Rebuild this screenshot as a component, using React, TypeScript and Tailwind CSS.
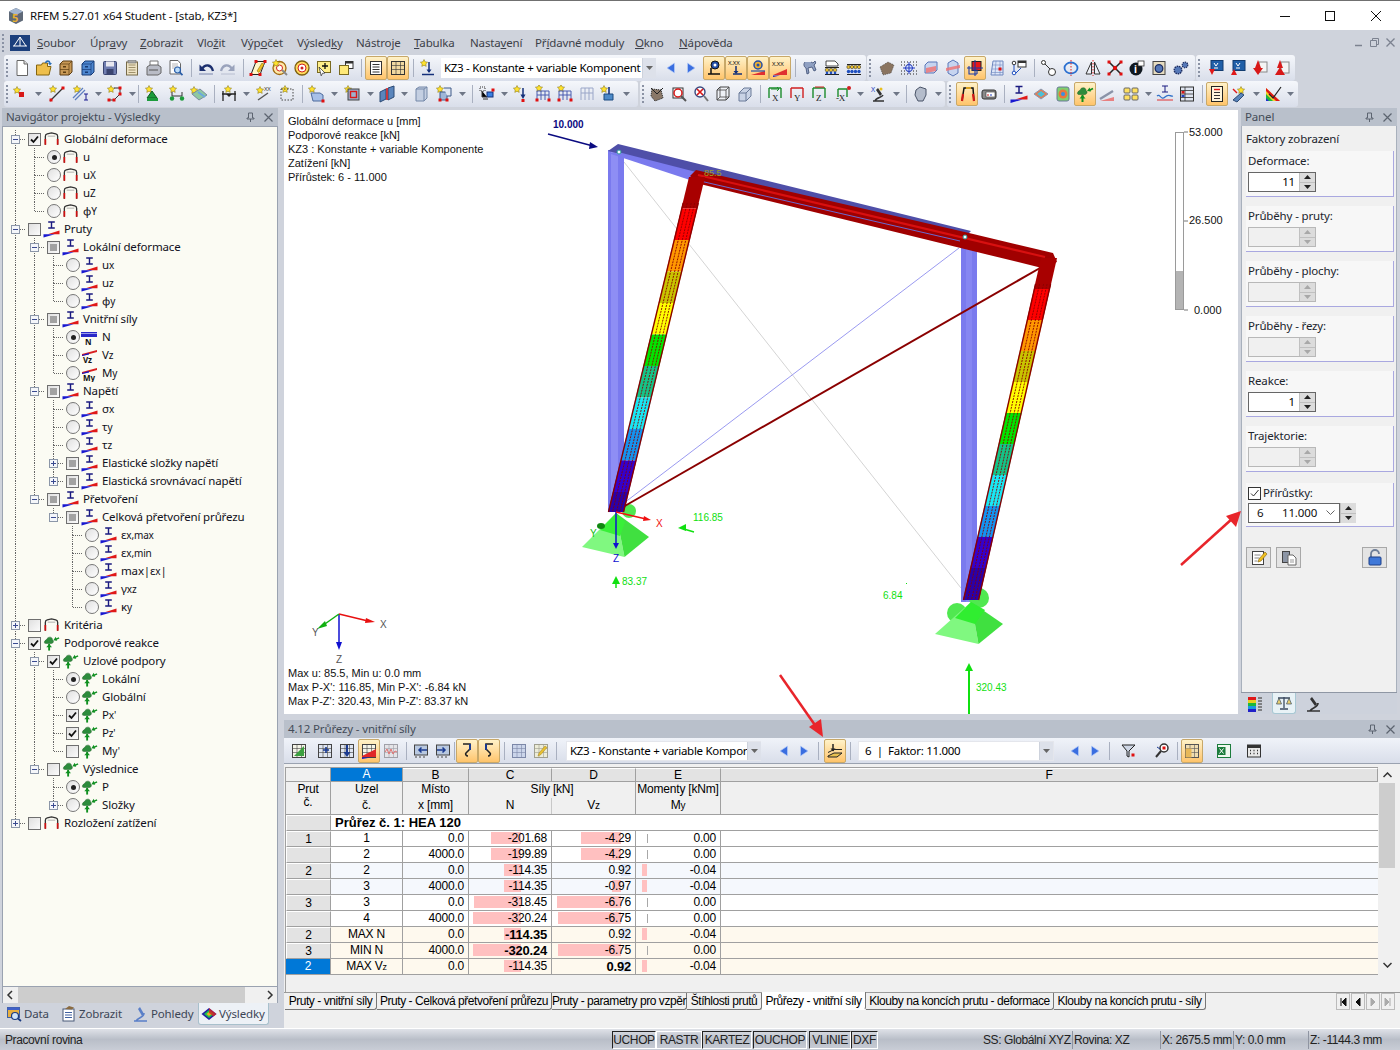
import type { ReactNode } from "react";

// ─── Toolbar icons (18x18 drawings) ───────────────────────────────────────────
const star = (x: number, y: number) => (
  <path
    d={`M${x} ${y - 3.5}l1.1 2.3 2.5.4-1.8 1.7.4 2.5-2.2-1.2-2.2 1.2.4-2.5-1.8-1.7 2.5-.4z`}
    fill="#ffe22e"
    stroke="#7a6a10"
    strokeWidth=".5"
  />
);
const redDot = (x: number, y: number) => <rect x={x - 1.5} y={y - 1.5} width="3" height="3" fill="#e01010" />;
const tableGrid = (fill = "#e8e2c8", stroke = "#555") => (
  <>
    <rect x="2.5" y="2.5" width="13" height="13" fill={fill} stroke={stroke} />
    <path d="M2.5 6.5h13M2.5 10.5h13M7 2.5v13M11.5 2.5v13" stroke={stroke} strokeWidth=".6" fill="none" />
  </>
);
const chest = (a: string, b: string) => (
  <>
    <path d="M3 5l3-3h9v11l-3 3H3z" fill={a} stroke={b} />
    <path d="M3 5h9v11M12 5l3-3M3 10.5h9" stroke={b} strokeWidth=".7" fill="none" />
    <rect x="6" y="7" width="3" height="1.5" fill={b} />
    <rect x="6" y="12.5" width="3" height="1.5" fill={b} />
  </>
);
const beamWedge = (
  <>
    <path d="M9 1.500v6.500M5.500 1.500h7M5.500 8h7" stroke="#1a1a80" strokeWidth="1.500" fill="none" />
    <path d="M5 14.500L17.500 10.500v4z" fill="#e01818" />
    <path d="M.5 14.500h12L.5 18z" fill="#1818d0" />
  </>
);
const frameGlyph = (
  <>
    <path d="M2.500 15V6q0-2 2-2.500L9 2.500l4.500 1q2 .5 2 2.500v9" fill="none" stroke="#333" strokeWidth="1.400" />
    <path d="M2.500 9v6M15.500 9v6" stroke="#d01010" strokeWidth="1.800" />
    <path d="M5 6h8" stroke="#999" strokeWidth=".8" />
  </>
);
const supGlyph = (
  <>
    <path d="M1.500 8.500c0-3 3-2.500 3.500-5 2.500-1.500 5-.5 5 2 1.500 1 1.500 3.500-1 4H3c-1 0-1.500-.5-1.500-1z" fill="#2d8c3c" stroke="#1c5c24" strokeWidth=".5" />
    <path d="M6.500 10v7" stroke="#0f9020" strokeWidth="2" />
    <path d="M3.500 13.500l3-3.500 3 3.500z" fill="#0f9020" />
    <path d="M17 3.500l-4 2" stroke="#0f9020" strokeWidth="1.600" />
    <path d="M13.500 2.500l-2.500 3.500 4 .5z" fill="#0f9020" />
  </>
);

const ICONS: Record<string, ReactNode> = {
  new: (
    <>
      <path d="M4 1.500h7l3.500 3.500v11.500H4z" fill="#fff" stroke="#666" />
      <path d="M11 1.500V5h3.500" fill="#ddd" stroke="#666" />
    </>
  ),
  open: (
    <>
      <path d="M1.500 6h5l1-2h5v3.500h3.500l-2 8.500H1.500z" fill="#eebf4c" stroke="#85650f" />
      <path d="M10.500 4c1-2.500 3.500-2.500 4.500 0" stroke="#2a6fb8" fill="none" strokeWidth="1.600" />
      <path d="M13 4h4l-2 2.500z" fill="#2a6fb8" />
    </>
  ),
  chest: chest("#c99a57", "#5c3d12"),
  chestb: chest("#4d86cf", "#173a75"),
  save: (
    <>
      <rect x="2.500" y="2.500" width="13" height="13" rx="1" fill="#6f7db0" stroke="#3a4470" />
      <rect x="5" y="2.500" width="8" height="5" fill="#e8e8f0" />
      <rect x="5.500" y="10" width="7" height="5.500" fill="#3a4470" />
    </>
  ),
  memo: (
    <>
      <rect x="3.500" y="3" width="11" height="13" fill="#eee3c4" stroke="#766a48" />
      <path d="M5.500 6h7M5.500 8.500h7M5.500 11h7M5.500 13.500h7" stroke="#8a7c55" strokeWidth=".8" />
      <rect x="5" y="1.500" width="8" height="2.500" fill="#a8a8a8" stroke="#666" strokeWidth=".5" />
    </>
  ),
  print: (
    <>
      <path d="M5 2h8v5H5z" fill="#fff" stroke="#777" />
      <path d="M2 8l3-2h8l3 2v6l-3 2H2z" fill="#b9bcc6" stroke="#666" />
      <path d="M4 11h9" stroke="#555" />
    </>
  ),
  prev: (
    <>
      <path d="M3 1.500h8l2.500 3V15H3z" fill="#fff" stroke="#666" />
      <path d="M5 5h6M5 7h6M5 9h3" stroke="#999" strokeWidth=".7" />
      <circle cx="10.500" cy="11" r="3" fill="#bcdcf8" stroke="#2a5ea8" strokeWidth="1.200" />
      <path d="M12.500 13.200l3 3" stroke="#2a5ea8" strokeWidth="1.800" />
    </>
  ),
  undo: (
    <>
      <path d="M2.500 5.500v6.500h6.500z" fill="#1c2f6e" />
      <path d="M5 10c3-5 9-5 11 2" fill="none" stroke="#1c2f6e" strokeWidth="2.300" />
      <path d="M2 15h14" stroke="#7a86ac" />
    </>
  ),
  redo: (
    <>
      <path d="M15.500 5.500v6.500H9z" fill="#9aa3bc" />
      <path d="M13 10c-3-5-9-5-11 2" fill="none" stroke="#9aa3bc" strokeWidth="2.300" />
      <path d="M2 15h14" stroke="#b8bed0" />
    </>
  ),
  para: (
    <>
      <path d="M7 2.500h9l-5 13H2z" fill="#fff6c8" stroke="#222" />
      <path d="M8 12l5-8 2 1.500-5 8z" fill="#f2c220" stroke="#7a5a00" strokeWidth=".5" />
      {redDot(7, 2.5)}
      {redDot(16, 2.5)}
      {redDot(2, 15.5)}
      {redDot(11, 15.5)}
    </>
  ),
  tgt: (
    <>
      <circle cx="8.500" cy="9" r="6.500" fill="#ffe9a8" stroke="#a06a10" strokeWidth="1.300" />
      <circle cx="8.500" cy="9" r="3" fill="#fff" stroke="#d02020" />
      <path d="M11 11l5 5" stroke="#888" strokeWidth="1.800" />
      {star(5, 4)}
    </>
  ),
  tgt2: (
    <>
      <circle cx="9" cy="9" r="7" fill="#ffda5c" stroke="#7d5f10" strokeWidth="1.300" />
      <circle cx="9" cy="9" r="4" fill="#fff" stroke="#d02020" />
      <circle cx="9" cy="9" r="1.500" fill="#d02020" />
    </>
  ),
  notep: (
    <>
      <rect x="2.500" y="2.500" width="13" height="11" fill="#ffef8a" stroke="#7a6a20" />
      <path d="M10 4v6M7 7h6" stroke="#101010" strokeWidth="1.300" />
      <path d="M4 8l6 6-2.500.3-1.300 2.500z" fill="#fff" stroke="#222" strokeWidth=".7" />
    </>
  ),
  wins: (
    <>
      <rect x="8.500" y="2.500" width="7.500" height="7" fill="#fff" stroke="#333" />
      <rect x="8.500" y="2.500" width="7.500" height="2" fill="#333" />
      <rect x="2.500" y="6.500" width="9" height="9" fill="#ffe978" stroke="#7a6a20" />
    </>
  ),
  list: (
    <>
      <rect x="3.500" y="2.500" width="11" height="13" fill="#fff" stroke="#333" />
      <path d="M5.500 5.500h7M5.500 8h7M5.500 10.500h7M5.500 13h7" stroke="#333" />
    </>
  ),
  table: tableGrid("#f0d8a0", "#333"),
  load: (
    <>
      {star(5, 4)}
      <path d="M10 3v10" stroke="#14307a" strokeWidth="1.500" />
      <path d="M7.500 10.500h5L10 14z" fill="#14307a" />
      <path d="M3 15.500h12" stroke="#14307a" strokeWidth="1.500" />
    </>
  ),
  tl: <path d="M12.500 4v10L5 9z" fill="#3a6ee0" stroke="#b8cdf8" strokeWidth=".7" />,
  tr: <path d="M5.500 4v10L13 9z" fill="#3a6ee0" stroke="#b8cdf8" strokeWidth=".7" />,
  p1: (
    <>
      <circle cx="10" cy="6" r="4" fill="#244fa8" stroke="#111" />
      <circle cx="10" cy="6" r="1.500" fill="#fff" />
      <path d="M6 9v6M3 15h12" stroke="#111" strokeWidth="1.500" />
    </>
  ),
  p2: (
    <>
      <text x="1" y="6" fontSize="6" fill="#111">X.XX</text>
      <path d="M9 7v7M6 15h9" stroke="#14307a" strokeWidth="1.500" />
      <path d="M6.500 12h5L9 15z" fill="#14307a" />
    </>
  ),
  p3: (
    <>
      <circle cx="9" cy="6" r="4" fill="#eeb030" stroke="#244fa8" strokeWidth="1.500" />
      <circle cx="9" cy="6" r="1.500" fill="#244fa8" />
      <path d="M2 16l14-4v4z" fill="#e03030" />
      <path d="M2 12h14" stroke="#244fa8" strokeWidth="1.200" />
    </>
  ),
  p4: (
    <>
      <text x="1" y="7" fontSize="6" fill="#111">X.XX</text>
      <path d="M2 16l14-6v6z" fill="#e03030" />
      <path d="M2 16.500h7l-7 1.500z" fill="#1a1ad0" />
    </>
  ),
  wrench: <path d="M4 3c-2 2-1 5 1 6l1 6 2-1-1-5 4-1 2 4 2-1-2-5c2-1 2-3 1-4l-2 2-2-1" fill="#8fa0c2" stroke="#3a4a70" strokeWidth=".8" />,
  abac1: (
    <>
      <path d="M3 2h9l3 3v2H3z" fill="#fff" stroke="#222" strokeWidth=".8" />
      <path d="M2 8.500h14M2 15.500h14" stroke="#222" />
      {[4, 8, 12].map((x) => <circle key={x} cx={x} cy="11" r="1.800" fill="#e8bf30" stroke="#222" strokeWidth=".5" />)}
      {[4, 8, 12].map((x) => <circle key={x} cx={x} cy="14" r="1.300" fill="#2050c0" />)}
    </>
  ),
  abac2: (
    <>
      <path d="M2 5.500h14M2 15.500h14" stroke="#222" />
      {[3.5, 7, 10.5, 14].map((x) => <circle key={x} cx={x} cy="8" r="1.700" fill="#e8bf30" stroke="#222" strokeWidth=".5" />)}
      {[3.5, 7, 10.5, 14].map((x) => <circle key={x} cx={x} cy="12.500" r="1.700" fill="#2050c0" />)}
    </>
  ),
  rough: <path d="M2 8l8-5 6 3-3 8-8 2z" fill="#8a7460" stroke="#333" strokeWidth=".6" strokeDasharray="1 1" />,
  grid: (
    <>
      <path d="M1 3h16M1 6h16M1 12h16M1 15h16" stroke="#222" strokeDasharray="1 2" />
      <circle cx="9" cy="9" r="3.500" fill="#dbe6ff" stroke="#2038c0" />
      <path d="M9 3v12M3 9h12" stroke="#2038c0" />
    </>
  ),
  iso1: (
    <>
      <path d="M6 3h9v8l-3 3H3V6z" fill="#c6d4f0" stroke="#5a76b8" />
      <path d="M4 9l10-2v5L4 14z" fill="#f07070" opacity=".8" />
    </>
  ),
  iso2: (
    <>
      <path d="M9 1l5 3v10l-5 3-5-3V4z" fill="#c6d4f0" stroke="#5a76b8" />
      <path d="M2 9l14-3v3L2 12z" fill="#f07070" opacity=".8" />
    </>
  ),
  iso3: (
    <>
      <rect x="6" y="2.500" width="9" height="9" fill="#e81818" stroke="#222" />
      <path d="M3 7v8h8M6 11h5v4M9 1v16M1 9h16" stroke="#1a3aa8" strokeWidth="1.100" fill="none" />
    </>
  ),
  mesh: (
    <>
      <path d="M5 2h10v14H3z" fill="#dde6f8" stroke="#6f88c0" />
      <path d="M4.500 6h10M4 10h11M3.500 13.500h11.500M8 2l-1 14M12 2v14" stroke="#6f88c0" strokeWidth=".6" />
      {redDot(12, 10)}
    </>
  ),
  path: (
    <>
      <rect x="8" y="2" width="8" height="6" fill="#fff" stroke="#333" />
      <rect x="8" y="2" width="8" height="2" fill="#333" />
      <circle cx="4" cy="4" r="1.800" fill="#fff" stroke="#333" />
      <circle cx="4" cy="14" r="1.800" fill="#fff" stroke="#2050c0" />
      <path d="M4 6v6M6 14l5-5" stroke="#2050c0" />
    </>
  ),
  chain: (
    <>
      <circle cx="3.500" cy="3.500" r="2" fill="#fff" stroke="#333" />
      <circle cx="12" cy="13" r="3.500" fill="#fff" stroke="#333" />
      <path d="M5 5l5 5" stroke="#333" />
    </>
  ),
  rot: (
    <>
      <ellipse cx="9" cy="9" rx="6.500" ry="5.500" fill="none" stroke="#2a6fd0" strokeWidth="1.800" />
      <path d="M9 1v16" stroke="#e02020" strokeDasharray="1.500 1.500" />
    </>
  ),
  mirror: (
    <>
      <path d="M7.500 3L2 15h5.500zM10.500 3L16 15h-5.500z" fill="#eef1f8" stroke="#333" />
      <path d="M9 1v16" stroke="#e02020" strokeDasharray="1.500 1.500" />
    </>
  ),
  xcross: (
    <>
      <path d="M3 3l12 12M15 3L3 15" stroke="#222" strokeWidth="1.500" />
      <circle cx="9" cy="9" r="2.200" fill="#e01010" />
      {redDot(3, 3)}
      {redDot(15, 3)}
      {redDot(3, 15)}
      {redDot(15, 15)}
    </>
  ),
  info: (
    <>
      <circle cx="8" cy="10" r="6.500" fill="#101820" />
      <text x="6" y="14" fontSize="10" fontWeight="700" fill="#fff">i</text>
      <rect x="10" y="2" width="6" height="5" fill="#fff" stroke="#333" strokeWidth=".8" />
    </>
  ),
  gear1: (
    <>
      <rect x="3" y="2.500" width="12" height="13" fill="#e6dcc0" stroke="#444" />
      <circle cx="9" cy="9.500" r="3.800" fill="#5578b8" stroke="#1c2c60" strokeWidth="1.300" />
    </>
  ),
  gears: (
    <>
      <circle cx="6" cy="11" r="3.800" fill="#5578b8" stroke="#1c2c60" strokeDasharray="1.500 .8" strokeWidth="1.400" />
      <circle cx="13" cy="6" r="2.800" fill="#5578b8" stroke="#1c2c60" strokeDasharray="1.300 .8" strokeWidth="1.200" />
    </>
  ),
  flagd: (
    <>
      <rect x="4" y="1.500" width="12" height="10" fill="#1f5fa8" stroke="#123c70" />
      <path d="M7 4l2 3 2-3M7 9h4" stroke="#fff" fill="none" />
      <path d="M2 10h6l-3 6z" fill="#e01818" />
    </>
  ),
  flagu: (
    <>
      <rect x="4" y="1.500" width="12" height="10" fill="#1f5fa8" stroke="#123c70" />
      <path d="M7 4l2 3 2-3M7 9h4" stroke="#fff" fill="none" />
      <path d="M2 16h6l-3-6z" fill="#e01818" />
    </>
  ),
  redd: (
    <>
      <rect x="8" y="3" width="8" height="10" fill="#f4f4f4" stroke="#888" />
      <path d="M7 1l3 8H4zM2 9h10l-5 7z" fill="#d81818" />
    </>
  ),
  redu: (
    <>
      <rect x="8" y="3" width="8" height="11" fill="#f4f4f4" stroke="#888" />
      <path d="M7 1l3 8H4zM2 16l5-8 5 8z" fill="#d81818" />
    </>
  ),
  node: (
    <>
      {star(5, 5)}
      <rect x="7" y="7" width="5" height="5" fill="#d81818" />
    </>
  ),
  line: (
    <>
      {star(5, 4)}
      <path d="M2 16L15 3" stroke="#333" strokeWidth="1.300" />
      {redDot(3, 15)}
      {redDot(15, 3)}
    </>
  ),
  linei: (
    <>
      {star(5, 4)}
      <path d="M1 13L11 3M3 15L13 5" stroke="#5f7fc0" strokeWidth="1.300" />
      <path d="M14 9v6M12 9h4M12 15h4" stroke="#1a1a90" />
    </>
  ),
  poly: (
    <>
      {star(5, 4)}
      <path d="M8 3h6v6l-3 3-3 3H3" fill="none" stroke="#333" />
      {redDot(14, 3)}
      {redDot(14, 9)}
      {redDot(8, 15)}
      {redDot(3, 15)}
    </>
  ),
  sup: (
    <>
      {star(5, 4)}
      <path d="M8 6l5 7H3z" fill="#1c9c3c" stroke="#0f5c20" />
      <rect x="3" y="13" width="11" height="3" fill="#1c9c3c" />
    </>
  ),
  sup2: (
    <>
      {star(5, 4)}
      <path d="M4 11h10M4 7v4M14 7v4" stroke="#333" />
      <circle cx="4" cy="13.500" r="2.200" fill="#1c9c3c" />
      <circle cx="14" cy="13.500" r="2.200" fill="#1c9c3c" />
    </>
  ),
  surf: (
    <>
      {star(4, 5)}
      <path d="M2 9l8-5 7 6-8 5z" fill="#8fc8a0" stroke="#7a8aa0" />
      <path d="M8 7l7 5" stroke="#6aa8e0" strokeWidth="2" />
    </>
  ),
  dim: (
    <>
      {star(8, 4)}
      <path d="M2 9h14M3 6v10M15 6v10" stroke="#222" strokeWidth="1.300" />
      <path d="M6 9l3 3 3-3" fill="#222" />
    </>
  ),
  dimx: (
    <>
      {star(4, 5)}
      <text x="8" y="6" fontSize="6" fill="#444">XX</text>
      <path d="M2 15L12 8" stroke="#555" strokeWidth="1.400" />
    </>
  ),
  boxd: (
    <>
      {star(7, 4)}
      <rect x="3" y="4" width="12" height="11" fill="none" stroke="#444" strokeDasharray="1.500 1.500" />
    </>
  ),
  plane: (
    <>
      {star(4, 4)}
      <path d="M3 8h9l3 2v6H5z" fill="#a7c0e8" stroke="#4d6a9c" />
      {redDot(15, 16)}
    </>
  ),
  frb: (
    <>
      {star(4, 4)}
      <rect x="4" y="4" width="11" height="11" fill="#9fb0cc" stroke="#444" />
      <rect x="6.500" y="6.500" width="6" height="6" fill="none" stroke="#d81818" strokeWidth="1.400" />
    </>
  ),
  sect: (
    <>
      <path d="M2 7l6-3v10l-6 3zM10 3l6-2v11l-6 3z" fill="#5a85bc" stroke="#2c4a74" />
      <path d="M9 3v12" stroke="#d81818" strokeWidth="1.500" />
    </>
  ),
  cubeg: (
    <>
      <path d="M4 4l3-2h8v11l-3 3H4z" fill="#c4cfe2" stroke="#7488a8" />
      <path d="M4 4h8v12M12 4l3-2" stroke="#7488a8" fill="none" />
    </>
  ),
  cubes: (
    <>
      {star(4, 4)}
      <path d="M4 7h7v8H4z" fill="#9fb6d8" stroke="#3e5a88" />
      <path d="M8 3h7v8h-4" fill="#dfe6f2" stroke="#3e5a88" />
      {redDot(4, 15)}
      {redDot(11, 15)}
    </>
  ),
  flow: (
    <>
      <rect x="2" y="2" width="5" height="4" fill="none" stroke="#333" strokeDasharray="1 1" />
      <rect x="9" y="7" width="6" height="5" fill="#3a7fe0" stroke="#14307a" />
      <path d="M4 6v6h5M5 14h5" stroke="#333" />
      {redDot(15, 5)}
    </>
  ),
  loadd: (
    <>
      {star(5, 4)}
      <path d="M11 3v9" stroke="#14307a" strokeWidth="1.500" />
      <path d="M8.500 9.500h5L11 14z" fill="#14307a" />
      {redDot(11, 15.5)}
    </>
  ),
  frames: (
    <>
      {star(5, 3)}
      <path d="M3 15V6h12v9M3 10h12M7 6v9M11 6v9" stroke="#4a5cb0" fill="none" />
      {redDot(3, 15)}
      {redDot(15, 15)}
    </>
  ),
  framesg: <path d="M3 15V3h12v12M3 8h12M7 3v12M11 3v12" stroke="#9aa6c8" fill="none" />,
  wall: (
    <>
      {star(4, 4)}
      <path d="M4 9h9v6H4z" fill="#4d8ac8" stroke="#1d4a80" />
      <path d="M9 2v7" stroke="#14307a" strokeWidth="1.600" />
    </>
  ),
  bug: (
    <>
      <path d="M4 4l9 1 2 8-8 3-4-5z" fill="#8a7868" stroke="#333" strokeDasharray="1.200 .8" />
      <path d="M3 3l6 6M15 3l-6 6" stroke="#222" />
    </>
  ),
  mag1: (
    <>
      <rect x="3" y="3" width="10" height="10" fill="#fff" stroke="#333" />
      <circle cx="8" cy="8" r="4" fill="none" stroke="#d81818" strokeWidth="1.500" />
      <path d="M11 11l5 5" stroke="#555" strokeWidth="2" />
    </>
  ),
  mag2: (
    <>
      <circle cx="8" cy="7" r="5" fill="#fff" stroke="#3a4a80" strokeWidth="1.400" />
      <path d="M5 4l6 6M11 4l-6 6" stroke="#d81818" strokeWidth="1.700" />
      <path d="M12 11l4 5" stroke="#777" strokeWidth="2" />
    </>
  ),
  box3: (
    <>
      <path d="M3 5l3-3h9v10l-3 3H3z" fill="#eef1f6" stroke="#444" />
      <path d="M6 2v10h9M6 12l-3 3M3 5h9v10M12 5l3-3" stroke="#444" fill="none" strokeWidth=".8" />
    </>
  ),
  box4: <path d="M3 8h7v8H3zM3 8l5-5h7v8l-5 5M10 8l5-5" fill="#c9d3e6" stroke="#6a7a98" />,
  fx: (
    <>
      <path d="M3 3h12M3 3v10M15 3v10" stroke="#1c8c2c" strokeWidth="1.400" />
      <path d="M5 4h8l-2-2M13 4l-2 2" stroke="#1c8c2c" fill="none" />
      <text x="6" y="16" fontSize="9" fontFamily="'Liberation Serif',serif" fill="#222">X</text>
    </>
  ),
  fy: (
    <>
      <path d="M3 3h12M3 3v10M15 3v10" stroke="#d02020" strokeWidth="1.400" />
      <text x="6" y="16" fontSize="9" fontFamily="'Liberation Serif',serif" fill="#222">Y</text>
    </>
  ),
  fz: (
    <>
      <path d="M3 3h12M3 3v10M15 3v10" stroke="#1c8c2c" strokeWidth="1.400" />
      <path d="M5 2h9" stroke="#d02020" />
      <text x="6" y="16" fontSize="9" fontFamily="'Liberation Serif',serif" fill="#222">Z</text>
    </>
  ),
  fnx: (
    <>
      <path d="M4 4h9M4 4v8M13 4v8" stroke="#1c8c2c" strokeWidth="1.400" />
      <circle cx="15" cy="3" r="2" fill="#d02020" />
      <text x="2" y="16" fontSize="9" fontFamily="'Liberation Serif',serif" fill="#222">-X</text>
    </>
  ),
  scope: (
    <>
      <text x="1" y="7" fontSize="7" fill="#2040c0">X</text>
      <path d="M8 3l4 6-2 2-4-6z" fill="#333" />
      <path d="M3 16h11M5 16c1-4 7-3 8-6" fill="none" stroke="#333" strokeWidth="1.400" />
      <circle cx="11" cy="4" r="1.500" fill="#e8c020" />
    </>
  ),
  shape: <path d="M4 5l4-3 6 2v6l-3 6H6l-3-6z" fill="#b4bccb" stroke="#4a5468" />,
  frameor: (
    <>
      <path d="M4 16L6 3h9l1 13" fill="none" stroke="#111" strokeWidth="1.500" />
      <path d="M4 16l1-7M16 16l-1-7" stroke="#d01818" strokeWidth="2.200" />
      <path d="M8 3h5" stroke="#d8a020" strokeWidth="2" />
    </>
  ),
  printc: (
    <>
      <rect x="2" y="5" width="14" height="9" rx="2" fill="#8a8a8a" stroke="#333" />
      <rect x="6" y="7" width="9" height="5" fill="#fff" stroke="#333" strokeWidth=".6" />
      <path d="M7 10h2" stroke="#d01818" />
      <path d="M10 10h2" stroke="#2040c0" />
    </>
  ),
  beamw: beamWedge,
  surfc: (
    <>
      <path d="M2 9l7-5 7 5-7 5z" fill="#e87a50" stroke="#8899b0" />
      <path d="M5 9l4-3 4 3-4 3z" fill="#4ac0d8" />
    </>
  ),
  boxc: (
    <>
      <rect x="3" y="2" width="12" height="14" rx="2" fill="#7fcf6f" stroke="#6a7a98" />
      <circle cx="9" cy="9" r="4.500" fill="#e8783c" />
      <circle cx="9" cy="9" r="2" fill="#3a8fe0" />
    </>
  ),
  supa: supGlyph,
  lens: (
    <>
      <path d="M2 14l13-8" stroke="#8a93a8" strokeWidth="2.500" />
      <path d="M2 16l14-4v4z" fill="#e88080" />
    </>
  ),
  quad: (
    <>
      <rect x="2" y="3" width="6" height="5" rx="1" fill="#ffe060" stroke="#666" />
      <rect x="10" y="3" width="6" height="5" rx="1" fill="#ffe060" stroke="#666" />
      <rect x="2" y="10" width="6" height="5" rx="1" fill="#ffe060" stroke="#666" />
      <rect x="10" y="10" width="6" height="5" rx="1" fill="#ffe060" stroke="#666" />
    </>
  ),
  wave: (
    <>
      <path d="M9 1v6M6 1h6M6 7h6" stroke="#1a1a80" />
      <path d="M1 11c3-3 4 5 8 1s5 0 8-1" fill="none" stroke="#3070c8" strokeWidth="1.200" />
      <path d="M1 15h16" stroke="#e03030" />
    </>
  ),
  rowsc: (
    <>
      <rect x="2.500" y="2" width="13" height="14" fill="#dfe5f0" stroke="#333" />
      <path d="M2.500 5.500h13M2.500 9h13M2.500 12.500h13M7 2v14" stroke="#333" strokeWidth=".8" />
      <rect x="3.500" y="6" width="3" height="2.500" fill="#d81818" />
      <rect x="3.500" y="10" width="3" height="2" fill="#2040c0" />
    </>
  ),
  listc: (
    <>
      <rect x="3.500" y="1.500" width="11" height="15" fill="#fff6dc" stroke="#222" />
      <path d="M6 4.500h6" stroke="#e01818" strokeWidth="1.400" />
      <path d="M6 7.500h6M6 10.500h6M6 13.500h6" stroke="#333" />
    </>
  ),
  spark: (
    <>
      {star(11, 5)}
      <path d="M3 15l8-7 3 2-7 7z" fill="#5a85bc" stroke="#2c4a74" />
      <path d="M3 4l4 4" stroke="#e01818" strokeWidth="1.400" />
    </>
  ),
  rainbow: (
    <>
      <path d="M2 16V3l14 13z" fill="#f2d02a" />
      <path d="M2 16V9l7 7z" fill="#1cb83c" />
      <path d="M2 16v-3l3 3z" fill="#2030d0" />
      <path d="M2 3v3l10 10h4z" fill="#e01818" />
      <path d="M5 9l4 4 8-11" fill="none" stroke="#222" strokeWidth="1.200" />
    </>
  ),
  tg: (
    <>
      {tableGrid("#f4f4e8", "#444")}
      <path d="M4 14L14 4v10z" fill="#3ca040" />
    </>
  ),
  tplus: (
    <>
      {tableGrid("#dfe5f0", "#444")}
      <path d="M10 5v6M7 8h6" stroke="#1a3a90" strokeWidth="1.600" />
    </>
  ),
  tdown: (
    <>
      {tableGrid("#dfe5f0", "#444")}
      <path d="M9 3v9" stroke="#1a3a90" strokeWidth="2" />
      <path d="M5.500 10h7L9 15z" fill="#1a3a90" />
    </>
  ),
  twedge: (
    <>
      {tableGrid("#f4f4e8", "#444")}
      <path d="M2 14l14-7v8H2z" fill="#e02828" />
      <path d="M2 15.500h9l-9 1.500z" fill="#1a1ad0" />
    </>
  ),
  twave: (
    <>
      {tableGrid("#e4e4e8", "#a0a0a8")}
      <path d="M3 10l2-3 2 5 2-5 2 5 2-3 2 1" fill="none" stroke="#e07070" />
    </>
  ),
  tabl: (
    <>
      <rect x="2.500" y="3" width="13" height="10" fill="#b8c8e0" stroke="#444" />
      <path d="M7 8h8M9.500 5.500L7 8l2.500 2.500" fill="none" stroke="#1a3a90" strokeWidth="1.500" />
      <path d="M4 14v2M8 14v2M12 14v2" stroke="#444" />
    </>
  ),
  tabr: (
    <>
      <rect x="2.500" y="3" width="13" height="10" fill="#b8c8e0" stroke="#444" />
      <path d="M3 8h8M8.500 5.500L11 8l-2.500 2.500" fill="none" stroke="#1a3a90" strokeWidth="1.500" />
      <path d="M4 14v2M8 14v2M12 14v2" stroke="#444" />
    </>
  ),
  hook1: (
    <>
      <path d="M5 2h7v5l-4 4c-1 1 0 3 2 3" fill="none" stroke="#222" strokeWidth="1.600" />
      <path d="M12 2v6" stroke="#1a3a90" strokeWidth="2" />
    </>
  ),
  hook2: (
    <>
      <path d="M13 2H6v5l4 4c1 1 0 3-2 3" fill="none" stroke="#222" strokeWidth="1.600" />
      <path d="M6 2v6" stroke="#1a3a90" strokeWidth="2" />
    </>
  ),
  tgrid: tableGrid("#cbd5ea", "#7c88a8"),
  tpen: (
    <>
      {tableGrid("#ececd8", "#a0a090")}
      <path d="M6 14l1-3 6-7 2 1.500-6 7z" fill="#e8c030" stroke="#a08020" strokeWidth=".5" />
    </>
  ),
  stack: (
    <>
      <path d="M2 14l6-3h8l-5 4H2z" fill="#e8c050" stroke="#222" />
      <path d="M2 10.500l6-3h8" fill="none" stroke="#222" />
      <path d="M7 2v7" stroke="#222" strokeWidth="1.500" />
      <path d="M4.500 6.500l2.500 3 2.500-3z" fill="#222" />
    </>
  ),
  filter: (
    <>
      <path d="M3 3h13l-6 6v6l-2-1V9z" fill="#cfd7e6" stroke="#222" />
      {redDot(14, 13)}
    </>
  ),
  glass: (
    <>
      <circle cx="11" cy="6" r="4" fill="#fff" stroke="#333" strokeWidth="1.500" />
      <path d="M8 9l-5 6" stroke="#333" strokeWidth="2" />
      {redDot(11, 6)}
      <path d="M4 5l3 2" stroke="#1a3a90" />
    </>
  ),
  tabor: (
    <>
      {tableGrid("#f0ddb0", "#555")}
      <path d="M2.500 6.500h6v9h-6z" fill="#e8b858" />
    </>
  ),
  xl: (
    <>
      <rect x="2.500" y="2.500" width="13" height="13" fill="#f0f8f0" stroke="#1c7c3c" />
      <rect x="2.500" y="5" width="8" height="8" fill="#1c7c3c" />
      <path d="M4.500 6.500l4 5M8.500 6.500l-4 5" stroke="#fff" />
    </>
  ),
  calc: (
    <>
      <rect x="2.500" y="3" width="13" height="12" fill="#e8e8e8" stroke="#333" />
      <rect x="2.500" y="3" width="13" height="3" fill="#333" />
      <path d="M5 8.500h1M8.500 8.500h1M12 8.500h1M5 11.500h1M8.500 11.500h1M12 11.500h1" stroke="#333" strokeWidth="1.600" />
    </>
  ),
  pencil: (
    <>
      <rect x="2.500" y="2.500" width="11" height="13" fill="#fff" stroke="#444" />
      <path d="M4.500 6h6M4.500 9h5M4.500 12h3" stroke="#888" />
      <path d="M8 13l1-3 6-7 2 2-6 7z" fill="#f0c020" stroke="#806010" strokeWidth=".6" />
    </>
  ),
  docs: (
    <>
      <rect x="2.500" y="2.500" width="7" height="11" fill="#8c95a5" stroke="#444" />
      <path d="M8 6h5l3 3v7H8z" fill="#fff" stroke="#666" />
      <path d="M10 11h4M10 13h4" stroke="#999" />
    </>
  ),
  lock: (
    <>
      <path d="M5 8V5a4 4 0 0 1 8 0" fill="none" stroke="#6f7f98" strokeWidth="1.800" />
      <rect x="3" y="8" width="12" height="8" rx="1" fill="#3f78d8" stroke="#1c3f88" />
    </>
  ),
  legend: (
    <>
      <rect x="2" y="2" width="8" height="3" fill="#e01818" />
      <rect x="2" y="5" width="8" height="3" fill="#e8d020" />
      <rect x="2" y="8" width="8" height="3" fill="#1cb83c" />
      <rect x="2" y="11" width="8" height="3" fill="#1a9ae0" />
      <rect x="2" y="14" width="8" height="3" fill="#2020c8" />
      <path d="M12 3h4M12 6h4M12 9h4M12 12h4M12 15h4" stroke="#666" strokeWidth="1.400" />
    </>
  ),
  scale: (
    <>
      <path d="M9 3v11M3 4h12M5 15h8" stroke="#3a4a60" strokeWidth="1.300" />
      <path d="M1.500 10l2.500-6 2.500 6zM11.500 10L14 4l2.500 6z" fill="#e8d070" stroke="#3a4a60" strokeWidth=".7" />
    </>
  ),
  micro: (
    <>
      <path d="M7 2l5 7-2 2-5-7z" fill="#333" />
      <path d="M2 16h13M5 16c2-4 8-3 8-8" fill="none" stroke="#333" strokeWidth="1.700" />
    </>
  ),
  tabdata: (
    <>
      <rect x="2.500" y="2.500" width="12" height="10" fill="#e8b040" stroke="#4060a0" />
      <rect x="2.500" y="2.500" width="12" height="2.500" fill="#4060c8" />
      <circle cx="10" cy="11" r="3.500" fill="#d0e4f8" stroke="#1a3a80" strokeWidth="1.200" />
      <path d="M13 13.500l3 2.500" stroke="#1a3a80" strokeWidth="1.800" />
    </>
  ),
  tabshow: (
    <>
      <rect x="3" y="4" width="11" height="12" fill="#fff" stroke="#4a5a78" />
      <path d="M5 7.500h7M5 10h7M5 12.500h7" stroke="#4060a0" />
      <path d="M5 4l4-3 5 1.500-2 2z" fill="#8a6a40" />
    </>
  ),
  tabview: (
    <>
      <path d="M8 2l4 7-2 2-4-7z" fill="#5a7fc8" />
      <path d="M2 16h13M4 16c2-4 8-3 8-8" fill="none" stroke="#5a7fc8" strokeWidth="1.600" />
    </>
  ),
  tabres: (
    <>
      <path d="M1.500 9L9 3l7.500 6L9 15z" fill="#2020a0" />
      <path d="M4 9l5-4 5 4-5 4z" fill="#1cc050" />
      <path d="M6.500 9L9 7l2.500 2L9 11z" fill="#f0b020" />
      <path d="M9 3l7.500 6-3 2.500L9 8z" fill="#e02020" opacity=".8" />
    </>
  ),
};

function Ico({ k, size = 18 }: { k: string; size?: number }) {
  return (
    <svg width={size} height={size} viewBox="0 0 18 18" className="shrink-0">
      {ICONS[k]}
    </svg>
  );
}

// ─── Toolbars ─────────────────────────────────────────────────────────────────
function Dd() {
  return (
    <span className="flex w-[12px] h-[22px] items-center justify-center">
      <svg width="7" height="4" viewBox="0 0 7 4">
        <path d="M0 0h7L3.500 4z" fill="#6e7686" />
      </svg>
    </span>
  );
}

// tokens: "|" separator, "!" thin separator, "_" 2px gap, "name*" highlighted, "name." with dropdown
function Tools({ spec }: { spec: string }) {
  return (
    <>
      {spec.split(" ").map((raw, i) => {
        if (raw === "|")
          return (
            <span key={i} className="flex w-[8px] h-[22px] justify-center">
              <span className="w-px h-[18px] mt-[2px] bg-[#a9b0c0]" />
            </span>
          );
        if (raw === "!")
          return <span key={i} className="w-[2px] h-[18px] border-l border-[#a9b0c0]" />;
        if (raw === "_") return <span key={i} className="w-[2px]" />;
        const hl = raw.endsWith("*");
        const dd = raw.endsWith(".");
        const k = raw.replace(/[*.]$/, "");
        const narrow = k === "tl" || k === "tr";
        return (
          <span key={i} className="flex items-center">
            <span
              className={
                hl
                  ? "flex w-[22px] h-[24px] items-center justify-center rounded-[2px] border border-[#c8a868] bg-linear-to-b from-[#fff2c8] to-[#ffc46a]"
                  : narrow
                    ? "flex w-[20px] h-[22px] items-center justify-center"
                    : "flex w-[22px] h-[22px] items-center justify-center"
              }
            >
              <Ico k={k} />
            </span>
            {dd && <Dd />}
          </span>
        );
      })}
    </>
  );
}

function Grip({ w }: { w: string }) {
  return (
    <span className={`${w} h-[18px] flex`}>
      <span className="ml-[2px] w-[2px] h-full border-l-2 border-dotted border-[#8a92a4]" />
    </span>
  );
}

function Bar({ className, children }: { className: string; children: ReactNode }) {
  return (
    <div
      className={`${className} h-[26px] flex items-center rounded-[3px] bg-linear-to-b from-[#f5f7fb] to-[#d9deea] shrink-0`}
    >
      {children}
    </div>
  );
}

function Combo({ text, w, sel }: { text: ReactNode; w: string; sel?: boolean }) {
  return (
    <div className={`${w} h-[20px] flex items-center bg-white shrink-0 ${sel ? "border border-[#e4e6ec]" : ""}`}>
      <span className="flex-1 whitespace-nowrap pl-[3px] text-[11.5px] text-black tracking-[-0.3px]">{text}</span>
      <span className="flex w-[14px] h-full items-center justify-center bg-[#dde1ea] border-l border-[#cdd2dc] shrink-0">
        <svg width="7" height="4" viewBox="0 0 7 4">
          <path d="M0 0h7L3.500 4z" fill="#666" />
        </svg>
      </span>
    </div>
  );
}

// ─── Navigator tree ───────────────────────────────────────────────────────────
function Guide({ c }: { c: string }) {
  const up = c !== " ";
  const down = c === "v" || c === "t" || c === "m" || c === "p";
  const right = "tlmMpP".includes(c);
  const box = "mMpP".includes(c);
  const plus = c === "p" || c === "P";
  return (
    <svg width="19" height="18" viewBox="0 0 19 18" className="shrink-0" shapeRendering="crispEdges">
      {up && <path d="M9.500 0V9" stroke="#666" strokeDasharray="1 1" />}
      {down && <path d="M9.500 9V18" stroke="#666" strokeDasharray="1 1" />}
      {right && <path d="M10 9.500H19" stroke="#666" strokeDasharray="1 1" />}
      {box && (
        <>
          <rect x="5.500" y="5.500" width="8" height="8" fill="#f4f6fa" stroke="#8b96a8" />
          <path d="M7 9.500h5" stroke="#3a4a90" />
          {plus && <path d="M9.500 7v5" stroke="#3a4a90" />}
        </>
      )}
    </svg>
  );
}

function Ctl({ c }: { c: string }) {
  if (c === "r" || c === "R")
    return (
      <span className="flex w-[14px] h-[14px] items-center justify-center rounded-full border border-[#777] bg-linear-to-br from-[#e0e0e0] to-[#fff] shrink-0 mr-[1px] ml-[3px]">
        {c === "R" && <span className="w-[5px] h-[5px] rounded-full bg-[#222]" />}
      </span>
    );
  return (
    <span className="flex w-[13px] h-[13px] items-center justify-center border border-[#6f6f6f] bg-linear-to-br from-[#e0e0e0] to-[#fbfbfb] shrink-0 mr-[2px] ml-[3px]">
      {c === "x" && (
        <svg width="11" height="11" viewBox="0 0 11 11">
          <path d="M2 5.500l2.500 2.500L9 2.500" fill="none" stroke="#111" strokeWidth="1.800" />
        </svg>
      )}
      {c === "s" && <span className="w-[7px] h-[7px] bg-[#a2a2a2]" />}
    </span>
  );
}

function TreeIcon({ i }: { i: string }) {
  if (i === "N" || i === "V" || i === "M") {
    const t = i === "N" ? "N" : i === "V" ? "Vz" : "My";
    return (
      <svg width="17" height="18" viewBox="0 0 17 18" className="shrink-0">
        {i === "N" ? (
          <>
            <rect x="0" y="4" width="16" height="5" fill="#2828c8" />
            <rect x="0" y="5" width="16" height="1" fill="#9a9ae8" />
          </>
        ) : (
          <>
            <path d="M1 8l15-4v2L1 10z" fill="#d82020" />
            <path d="M1 9l7-2v1.500L1 10z" fill="#1818c8" />
          </>
        )}
        <text x={i === "N" ? 4 : 2} y="17" fontSize="8" fontWeight="700" fill="#111">{t}</text>
      </svg>
    );
  }
  const g = i === "frame" ? frameGlyph : i === "sup" ? supGlyph : beamWedge;
  return (
    <svg width="17" height="18" viewBox="0 0 18 18" className="shrink-0">
      {g}
    </svg>
  );
}

const S = ({ t }: { t: string }) => <span className="text-[10px]">{t}</span>;

type Row = [string, string, string, ReactNode];

const TREE: Row[] = [
  ["m", "x", "frame", "Globální deformace"],
  ["vt", "R", "frame", "u"],
  ["vt", "r", "frame", <>u<S t="X" /></>],
  ["vt", "r", "frame", <>u<S t="Z" /></>],
  ["vl", "r", "frame", <>φ<S t="Y" /></>],
  ["m", "b", "beam", "Pruty"],
  ["vm", "s", "beam", "Lokální deformace"],
  ["vvt", "r", "beam", <>u<S t="x" /></>],
  ["vvt", "r", "beam", <>u<S t="z" /></>],
  ["vvl", "r", "beam", <>φ<S t="y" /></>],
  ["vm", "s", "beam", "Vnitřní síly"],
  ["vvt", "R", "N", "N"],
  ["vvt", "r", "V", <>V<S t="z" /></>],
  ["vvl", "r", "M", <>M<S t="y" /></>],
  ["vm", "s", "beam", "Napětí"],
  ["vvt", "r", "beam", <>σ<S t="x" /></>],
  ["vvt", "r", "beam", <>τ<S t="y" /></>],
  ["vvt", "r", "beam", <>τ<S t="z" /></>],
  ["vvp", "s", "beam", "Elastické složky napětí"],
  ["vvP", "s", "beam", "Elastická srovnávací napětí"],
  ["vM", "s", "beam", "Přetvoření"],
  ["v M", "s", "beam", "Celková přetvoření průřezu"],
  ["v  t", "r", "beam", <>ε<S t="x,max" /></>],
  ["v  t", "r", "beam", <>ε<S t="x,min" /></>],
  ["v  t", "r", "beam", <>max|ε<S t="x" />|</>],
  ["v  t", "r", "beam", <>γ<S t="xz" /></>],
  ["v  l", "r", "beam", <>κ<S t="y" /></>],
  ["p", "b", "frame", "Kritéria"],
  ["m", "x", "sup", "Podporové reakce"],
  ["vm", "x", "sup", "Uzlové podpory"],
  ["vvt", "R", "sup", "Lokální"],
  ["vvt", "r", "sup", "Globální"],
  ["vvt", "x", "sup", <>P<S t="x'" /></>],
  ["vvt", "x", "sup", <>P<S t="z'" /></>],
  ["vvl", "b", "sup", <>M<S t="y'" /></>],
  ["vM", "b", "sup", "Výslednice"],
  ["v t", "R", "sup", "P"],
  ["v P", "r", "sup", "Složky"],
  ["P", "b", "frame", "Rozložení zatížení"],
];

function PanelHead({ title }: { title: string }) {
  return (
    <div className="h-[18px] flex items-center justify-between bg-[#b9c0cb] shrink-0 pl-[4px] pr-[5px]">
      <span className="text-[11.5px] text-[#444c58] whitespace-nowrap">{title}</span>
      <span className="flex items-center gap-[9px]">
        <svg width="9" height="10" viewBox="0 0 9 10">
          <path d="M2.500 1h4v5h1.500v1H1V6h1.500zM4.500 7v3" fill="none" stroke="#5c6470" />
        </svg>
        <svg width="9" height="9" viewBox="0 0 9 9">
          <path d="M.5.5l8 8M8.500.5l-8 8" stroke="#5c6470" strokeWidth="1.200" />
        </svg>
      </span>
    </div>
  );
}

function Navigator() {
  return (
    <aside className="w-[280px] shrink-0 flex flex-col pl-[2px] pr-[2px]">
      <PanelHead title="Navigátor projektu - Výsledky" />
      <div className="h-[861px] flex flex-col border border-[#9aa2b0] bg-[#fbfbf3] pt-[3px] pl-[3px] overflow-hidden">
        {TREE.map((r, idx) => (
          <div key={idx} className="flex h-[18px] items-center shrink-0">
            {r[0].split("").map((c, j) => (
              <Guide key={j} c={c} />
            ))}
            <Ctl c={r[1]} />
            <TreeIcon i={r[2]} />
            <span className="ml-[4px] text-[11.5px] text-[#101020] leading-none whitespace-nowrap">{r[3]}</span>
          </div>
        ))}
      </div>
      <div className="h-[16px] flex items-center justify-between bg-[#f0f0f0] border-x border-[#9aa2b0] shrink-0">
        <svg width="15" height="16" viewBox="0 0 15 16"><path d="M9 4L5 8l4 4" fill="none" stroke="#333" strokeWidth="1.500" /></svg>
        <span className="w-[227px] h-full bg-[#cdcdcd]" />
        <span className="flex-1" />
        <svg width="15" height="16" viewBox="0 0 15 16"><path d="M6 4l4 4-4 4" fill="none" stroke="#333" strokeWidth="1.500" /></svg>
      </div>
      <div className="h-[22px] flex items-center pl-[3px] shrink-0 text-[11.5px] text-[#3c4656]">
        <span className="w-[55px] flex items-center gap-px shrink-0"><Ico k="tabdata" /><span>Data</span></span>
        <span className="w-[72px] flex items-center gap-px shrink-0"><Ico k="tabshow" /><span>Zobrazit</span></span>
        <span className="w-[66px] flex items-center gap-px shrink-0"><Ico k="tabview" /><span>Pohledy</span></span>
        <span className="w-[71px] flex items-center gap-px h-full shrink-0 pl-[1px] bg-[#edf1f6] border-x border-b border-[#a8c0cc] rounded-b-[3px]"><Ico k="tabres" /><span>Výsledky</span></span>
      </div>
    </aside>
  );
}

// ─── 3D view ──────────────────────────────────────────────────────────────────
const BANDS = ["#a80000", "#ff0000", "#ff9800", "#c8c400", "#ffff00", "#00e400", "#14c488", "#18e8f4", "#1494f0", "#3400cc", "#2a00a8"];

function Column({ tx, ty, bx, by, step }: { tx: number; ty: number; bx: number; by: number; step: number }) {
  const at = (y: number) => tx + ((y - ty) / (by - ty)) * (bx - tx);
  const hw = 8;
  const polys: ReactNode[] = [];
  for (let i = 0; i < BANDS.length; i++) {
    const y0 = ty + i * step;
    const y1 = i === BANDS.length - 1 ? by : ty + (i + 1) * step;
    if (y0 >= by) break;
    const a = at(y0);
    const b = at(y1);
    polys.push(<polygon key={i} points={`${a - hw},${y0} ${a + hw},${y0} ${b + hw},${y1} ${b - hw},${y1}`} fill={BANDS[i]} />);
  }
  const offs = [-7.5, -3.5, 0.5, 4, 7.5];
  return (
    <g>
      {polys}
      {offs.map((o) => (
        <line
          key={o}
          x1={at(ty + 26) + o}
          y1={ty + 26}
          x2={bx + o}
          y2={by}
          stroke="#8a0000"
          strokeWidth={o === -7.5 || o === 7.5 ? 1.4 : 0.9}
          strokeDasharray={o === -7.5 || o === 7.5 ? undefined : "2 1"}
        />
      ))}
    </g>
  );
}

function Model() {
  return (
    <svg viewBox="284 110 954 604" className="absolute inset-0 w-full h-full">
      {/* color scale */}
      <rect x="1175.500" y="132.500" width="8" height="177" fill="#fff" stroke="#9a9a9a" />
      <rect x="1176" y="271" width="7" height="38" fill="#b4b4b4" />
      <path d="M1184 132h4M1184 221h4M1184 310h4" stroke="#777" />
      <text x="1189" y="136" fontSize="11" fill="#111">53.000</text>
      <text x="1189" y="224" fontSize="11" fill="#111">26.500</text>
      <text x="1194" y="314" fontSize="11" fill="#111">0.000</text>

      {/* undeformed frame */}
      <line x1="624" y1="162" x2="961" y2="588" stroke="#d4d4d4" />
      <rect x="608" y="150" width="16" height="362" fill="#7a7aee" />
      <rect x="611" y="150" width="7" height="362" fill="#8e8ef4" />
      <rect x="961" y="240" width="16" height="362" fill="#7a7aee" />
      <rect x="966" y="240" width="6" height="362" fill="#8686f2" />
      <polygon points="608,151 618,144 971,231 961,241" fill="#4f4fa8" />
      <polygon points="608,153 622,153 700,173 693,181" fill="#7a7aee" />
      <line x1="959" y1="248" x2="624" y2="503" stroke="#9a9af0" />

      {/* supports stand behind the deformed members */}
      <circle cx="629" cy="511" r="7" fill="#50e850" />
      <polygon points="582,547 616,513 624.500,557" fill="#80f880" />
      <polygon points="616,513 649,537 624.500,557" fill="#40e040" />
      <polygon points="600,530 616,513 625,522 620,536" fill="#38f038" />
      <ellipse cx="601" cy="526" rx="4" ry="3" fill="#108810" />
      <circle cx="979" cy="598" r="10" fill="#50e850" />
      <circle cx="957" cy="613" r="10" fill="#50e850" />
      <polygon points="935,634 971,602 978.500,644" fill="#80f880" />
      <polygon points="971,602 1003,624 978.500,644" fill="#40e040" />
      <polygon points="955,618 971,602 985,610 975,624" fill="#30ee30" />

      {/* deformed frame */}
      <polygon points="690,176 696,170 969,233 1053,253 1057,262 1042,268 700,184" fill="#a00000" />
      <line x1="698" y1="175" x2="1045" y2="257" stroke="#d81010" strokeWidth="2" />
      <line x1="700" y1="181" x2="960" y2="241" stroke="#6a6ad0" />
      <line x1="1040" y1="268" x2="623" y2="507" stroke="#8a0000" strokeWidth="2" />
      <Column tx={697} ty={177} bx={616} by={512} step={31.5} />
      <Column tx={1049} ty={258} bx={971} by={600} step={31} />
      <circle cx="619" cy="152" r="2" fill="#fff" stroke="#2a9a9a" />
      <circle cx="965" cy="237" r="2" fill="#fff" stroke="#2a9a9a" />
      <text x="704" y="176" fontSize="9" fill="#a0a020">85.5</text>

      {/* local axes at the left support */}
      <line x1="616" y1="512" x2="616" y2="546" stroke="#1010d0" strokeWidth="1.500" />
      <polygon points="613,543 619,543 616,549" fill="#1010d0" />
      <line x1="616" y1="512" x2="646" y2="519" stroke="#f01010" strokeWidth="1.500" />
      <polygon points="644,516 651,520 643,521" fill="#f01010" />
      <text x="656" y="527" fontSize="10" fill="#f01010">X</text>
      <text x="590" y="537" fontSize="10" fill="#10c010">Y</text>
      <text x="613" y="562" fontSize="10" fill="#1010d0">Z</text>

      {/* reactions */}
      <g fill="#10e010">
        <text x="693" y="521" fontSize="10">116.85</text>
        <text x="622" y="585" fontSize="10">83.37</text>
        <text x="883" y="599" fontSize="10">6.84</text>
        <text x="976" y="691" fontSize="10">320.43</text>
        <polygon points="678,528 686,524 686,531" />
        <polygon points="616,576 612,584 620,584" />
        <polygon points="969,663 965,671 973,671" />
        <rect x="906" y="583" width="1" height="1" />
      </g>
      <line x1="694" y1="532" x2="684" y2="529" stroke="#10e010" strokeWidth="1.500" />
      <line x1="616" y1="582" x2="616" y2="588" stroke="#10e010" strokeWidth="1.500" />
      <line x1="969" y1="668" x2="969" y2="714" stroke="#10e010" strokeWidth="2" />

      {/* load */}
      <text x="553" y="128" fontSize="10" fontWeight="700" fill="#0a0a80">10.000</text>
      <line x1="548" y1="134" x2="593" y2="146" stroke="#0a0a80" strokeWidth="1.500" />
      <polygon points="590,142 598,147 589,149" fill="#0a0a80" />

      {/* coordinate triad */}
      <line x1="339" y1="614" x2="339" y2="644" stroke="#1010d0" strokeWidth="1.500" />
      <polygon points="336,642 342,642 339,650" fill="#1010d0" />
      <line x1="339" y1="614" x2="368" y2="621" stroke="#e81010" strokeWidth="1.500" />
      <polygon points="366,618 375,622 365,623" fill="#e81010" />
      <line x1="339" y1="614" x2="322" y2="626" stroke="#10b010" strokeWidth="1.500" />
      <polygon points="325,621 317,629 327,626" fill="#10b010" />
      <text x="380" y="628" fontSize="10" fill="#555">X</text>
      <text x="312" y="636" fontSize="10" fill="#555">Y</text>
      <text x="336" y="663" fontSize="10" fill="#555">Z</text>
    </svg>
  );
}

function View() {
  return (
    <div className="relative w-[954px] h-[604px] mt-[2px] bg-white shrink-0 tracking-normal [font-family:'Liberation_Sans',sans-serif]">
      <Model />
      <div className="relative flex flex-col justify-between h-full pl-[4px] pt-[4px] pb-[6px] text-[11px] leading-[14px] text-[#111]">
        <div>
          <div>Globální deformace u [mm]</div>
          <div>Podporové reakce [kN]</div>
          <div>KZ3 : Konstante + variable Komponente</div>
          <div>Zatížení [kN]</div>
          <div>Přírůstek: 6 - 11.000</div>
        </div>
        <div>
          <div>Max u: 85.5, Min u: 0.0 mm</div>
          <div>Max P-X': 116.85, Min P-X': -6.84 kN</div>
          <div>Max P-Z': 320.43, Min P-Z': 83.37 kN</div>
        </div>
      </div>
    </div>
  );
}

// ─── Side panel ───────────────────────────────────────────────────────────────
function SpinBtns({ off }: { off?: boolean }) {
  const c = off ? "#a8a8a8" : "#222";
  return (
    <span className="flex flex-col w-[16px] h-full border-l border-[#c0c0c0] bg-[#dcdcdc] shrink-0">
      <span className="flex flex-1 items-center justify-center border-b border-[#c0c0c0]">
        <svg width="7" height="4" viewBox="0 0 7 4"><path d="M3.500 0L7 4H0z" fill={c} /></svg>
      </span>
      <span className="flex flex-1 items-center justify-center">
        <svg width="7" height="4" viewBox="0 0 7 4"><path d="M0 0h7L3.500 4z" fill={c} /></svg>
      </span>
    </span>
  );
}

function Factor({ label, value, mb }: { label: string; value?: string; mb: string }) {
  const off = value === undefined;
  return (
    <div className={`h-[46px] ${mb} flex flex-col bg-[#f7f7f7] border-r border-b border-[#a9a8e0] pl-[2px] pt-[1px]`}>
      <span className="h-[18px] text-[11.5px] text-[#20242c] whitespace-nowrap leading-[18px]">{label}</span>
      <div className={`w-[68px] h-[20px] flex mt-[2px] border ${off ? "border-[#b8b8b8] bg-[#f0f0f0]" : "border-[#666] bg-white"}`}>
        <span className="flex-1 text-right pr-[4px] text-[11.5px] leading-[18px] text-black">{value}</span>
        <SpinBtns off={off} />
      </div>
    </div>
  );
}

function SidePanel() {
  return (
    <aside className="flex-1 flex flex-col ml-[3px] pr-[3px]">
      <PanelHead title="Panel" />
      <div className="h-[566px] flex flex-col bg-[#f0f0f0] border-x border-[#a8b0bc] pl-[4px] pr-[2px]">
        <div className="h-[25px] flex items-center text-[11.5px] text-[#20242c] whitespace-nowrap">Faktory zobrazení</div>
        <Factor label="Deformace:" value="11" mb="mb-[9px]" />
        <Factor label="Průběhy - pruty:" mb="mb-[9px]" />
        <Factor label="Průběhy - plochy:" mb="mb-[9px]" />
        <Factor label="Průběhy - řezy:" mb="mb-[9px]" />
        <Factor label="Reakce:" value="1" mb="mb-[9px]" />
        <Factor label="Trajektorie:" mb="mb-[11px]" />
        <div className="h-[44px] flex flex-col bg-[#f7f7f7] border-r border-b border-[#a9a8e0] pl-[2px]">
          <div className="h-[20px] flex items-center gap-[2px]">
            <span className="flex w-[13px] h-[13px] items-center justify-center border border-[#333] bg-white">
              <svg width="11" height="11" viewBox="0 0 11 11"><path d="M2 5.500l2.500 2.500L9.500 2" fill="none" stroke="#333" /></svg>
            </span>
            <span className="text-[11.5px] text-[#20242c]">Přírůstky:</span>
          </div>
          <div className="flex h-[20px]">
            <div className="w-[92px] h-full flex items-center border border-[#666] bg-white text-[11.5px] text-[#111]">
              <span className="w-[33px] pl-[8px]">6</span>
              <span className="w-[44px]">11.000</span>
              <svg width="9" height="6" viewBox="0 0 9 6"><path d="M.5.5l4 4 4-4" fill="none" stroke="#666" /></svg>
            </div>
            <SpinBtns />
          </div>
        </div>
        <div className="flex mt-[20px]">
          <span className="flex w-[25px] h-[21px] items-center justify-center bg-[#e4e4e4] border border-[#a8a8a8]"><Ico k="pencil" /></span>
          <span className="flex w-[25px] h-[21px] ml-[5px] items-center justify-center bg-[#e4e4e4] border border-[#a8a8a8]"><Ico k="docs" /></span>
          <span className="flex w-[25px] h-[21px] ml-[61px] items-center justify-center bg-[#e4e4e4] border border-[#a8a8a8]"><Ico k="lock" /></span>
        </div>
      </div>
      <div className="h-[22px] flex items-center bg-[#cdd2dc] border-t border-[#8f97a4] pl-[5px]">
        <Ico k="legend" />
        <span className="flex w-[24px] h-full ml-[8px] items-center justify-center bg-[#e8f2f6] border-x border-b border-[#a8c8d4] rounded-b-[3px]"><Ico k="scale" /></span>
        <span className="ml-[9px]"><Ico k="micro" /></span>
      </div>
    </aside>
  );
}

// ─── Results table ────────────────────────────────────────────────────────────
type T = { h: string; sel?: boolean; a: ReactNode; b: string; n: number; v: number; m: number; bg: string; bold?: "n" | "v" };
const WHITE = "bg-white";
const BLUE = "bg-[#f5f8fd]";
const CREAM = "bg-[#fef9ee]";

const ROWS: T[] = [
  { h: "1", a: "1", b: "0.0", n: -201.68, v: -4.29, m: 0, bg: WHITE },
  { h: "", a: "2", b: "4000.0", n: -199.89, v: -4.29, m: 0, bg: WHITE },
  { h: "2", a: "2", b: "0.0", n: -114.35, v: 0.92, m: -0.04, bg: BLUE },
  { h: "", a: "3", b: "4000.0", n: -114.35, v: -0.97, m: -0.04, bg: BLUE },
  { h: "3", a: "3", b: "0.0", n: -318.45, v: -6.76, m: 0, bg: WHITE },
  { h: "", a: "4", b: "4000.0", n: -320.24, v: -6.75, m: 0, bg: WHITE },
  { h: "2", a: "MAX N", b: "0.0", n: -114.35, v: 0.92, m: -0.04, bg: CREAM, bold: "n" },
  { h: "3", a: "MIN N", b: "4000.0", n: -320.24, v: -6.75, m: 0, bg: CREAM, bold: "n" },
  { h: "2", sel: true, a: <>MAX V<span className="text-[9px]">z</span></>, b: "0.0", n: -114.35, v: 0.92, m: -0.04, bg: CREAM, bold: "v" },
];

const CB = "border-r border-b border-[#a0a0a0]";

function ValCell({ w, val, zero, k, bold, neutral }: { w: string; val: number; zero: number; k: number; bold?: boolean; neutral?: boolean }) {
  const len = Math.abs(val) * k;
  const left = val < 0 ? zero - len : zero;
  return (
    <div className={`${w} relative shrink-0 h-full ${CB} text-right pr-[4px] ${bold ? "font-bold text-[13px]" : ""}`}>
      {neutral && val === 0 ? (
        <span className="absolute top-[3px] bottom-[3px] w-px bg-[#a8a8a8]" style={{ left: zero }} />
      ) : (
        <span
          className={`absolute top-[1px] bottom-[2px] ${val < 0 ? "bg-[#ffc0c0]" : "bg-[#dfe8f8]"}`}
          style={{ left, width: len }}
        />
      )}
      <span className="relative">{val.toFixed(2)}</span>
    </div>
  );
}

function RowHeadBtn({ children, sel }: { children?: ReactNode; sel?: boolean }) {
  return (
    <div className={`w-[45px] h-full shrink-0 text-center border-r border-b border-[#a0a0a0] ${sel ? "bg-[#0078d7] text-white" : "bg-[#e3e3e3] border-l border-t border-l-white border-t-white"}`}>
      {children}
    </div>
  );
}

function Table() {
  const hCell = "h-full shrink-0 flex items-center justify-center bg-[#e3e3e3] border-r border-b border-[#a0a0a0] border-t-white border-t";
  return (
    <div className="flex-1 flex min-h-0 bg-[#f0f0f0] pl-[1px] pt-[3px] text-[12px] leading-[15px] text-black tracking-[-0.2px] [font-family:'Liberation_Sans',sans-serif]">
      <div className="w-[1093px] flex flex-col border-l border-t border-[#a0a0a0]">
        <div className="flex h-[14px] shrink-0">
          <div className="w-[45px] h-full shrink-0 bg-[#f0f0f0] border-r border-b border-[#a0a0a0]" />
          <div className="w-[72px] h-full flex items-center justify-center bg-[#0078d7] text-white border-r border-b border-[#a0a0a0]">A</div>
          <div className={`${hCell} w-[66px]`}>B</div>
          <div className={`${hCell} w-[83px]`}>C</div>
          <div className={`${hCell} w-[84px]`}>D</div>
          <div className={`${hCell} w-[85px]`}>E</div>
          <div className={`${hCell} flex-1`}>F</div>
        </div>
        <div className="flex h-[33px] shrink-0 bg-[#f0f0f0]">
          <div className="w-[45px] border-r border-b border-[#a0a0a0] text-center pt-[1px] leading-[13px]">
            <div>Prut</div>
            <div>č.</div>
          </div>
          <div className="w-[72px] border-r border-b border-[#a0a0a0] text-center">
            <div className="h-[16px]">Uzel</div>
            <div>č.</div>
          </div>
          <div className="w-[66px] border-r border-b border-[#a0a0a0] text-center">
            <div className="h-[16px]">Místo</div>
            <div>x [mm]</div>
          </div>
          <div className="w-[167px] border-r border-b border-[#a0a0a0] flex flex-col">
            <div className="h-[16px] text-center">Síly [kN]</div>
            <div className="flex flex-1 text-center">
              <div className="w-[83px] border-r border-[#c8c8c8]">N</div>
              <div className="flex-1">V<span className="text-[10px]">z</span></div>
            </div>
          </div>
          <div className="w-[85px] border-r border-b border-[#a0a0a0] text-center">
            <div className="h-[16px]">Momenty [kNm]</div>
            <div>M<span className="text-[10px]">y</span></div>
          </div>
          <div className="flex-1 border-b border-[#a0a0a0]" />
        </div>
        <div className="flex h-[16px] shrink-0 bg-white">
          <RowHeadBtn />
          <div className="flex-1 pl-[4px] font-bold text-[13px] tracking-normal border-b border-[#a0a0a0]">Průřez č. 1: HEA 120</div>
        </div>
        {ROWS.map((r, i) => (
          <div key={i} className={`flex h-[16px] shrink-0 ${r.bg}`}>
            <RowHeadBtn sel={r.sel}>{r.h}</RowHeadBtn>
            <div className={`w-[72px] shrink-0 text-center ${CB}`}>{r.a}</div>
            <div className={`w-[66px] shrink-0 text-right pr-[4px] ${CB}`}>{r.b}</div>
            <ValCell w="w-[83px]" val={r.n} zero={52} k={0.1484} bold={r.bold === "n"} />
            <ValCell w="w-[84px]" val={r.v} zero={69} k={9.4} bold={r.bold === "v"} />
            <ValCell w="w-[85px]" val={r.m} zero={11} k={137} neutral />
            <div className="flex-1 border-b border-[#a0a0a0]" />
          </div>
        ))}
      </div>
      <div className="w-[16px] h-[206px] ml-[1px] flex flex-col bg-[#f0f0f0] shrink-0">
        <span className="flex h-[16px] items-center justify-center">
          <svg width="9" height="6" viewBox="0 0 9 6"><path d="M.5 5l4-4 4 4" fill="none" stroke="#333" strokeWidth="1.500" /></svg>
        </span>
        <span className="h-[85px] bg-[#cdcdcd]" />
        <span className="flex-1" />
        <span className="flex h-[16px] items-center justify-center">
          <svg width="9" height="6" viewBox="0 0 9 6"><path d="M.5 1l4 4 4-4" fill="none" stroke="#333" strokeWidth="1.500" /></svg>
        </span>
      </div>
    </div>
  );
}

const TABS: { t: string; w: string; on?: boolean }[] = [
  { t: "Pruty - vnitřní síly", w: "w-[92px]" },
  { t: "Pruty - Celková přetvoření průřezu", w: "w-[175px]" },
  { t: "Pruty - parametry pro vzpěr", w: "w-[135px]" },
  { t: "Štíhlosti prutů", w: "w-[75px]" },
  { t: "Průřezy - vnitřní síly", w: "w-[104px]", on: true },
  { t: "Klouby na koncích prutu - deformace", w: "w-[188px]" },
  { t: "Klouby na koncích prutu - síly", w: "w-[152px]" },
];

function TabStrip() {
  return (
    <div className="h-[36px] shrink-0 bg-[#f0f0f0] text-[12px] text-black tracking-[-0.45px] [font-family:'Liberation_Sans',sans-serif]">
      <div className="h-[18px] flex border-t border-[#9a9a9a] bg-[#f0f0f0]">
        <div className="flex flex-1 pl-[1px]">
          {TABS.map((t) => (
            <span
              key={t.t}
              className={`${t.w} shrink-0 flex items-center justify-center whitespace-nowrap border-r border-b border-[#777] rounded-br-[3px] ${t.on ? "bg-white border-b-white -mt-[1px]" : ""}`}
            >
              {t.t}
            </span>
          ))}
        </div>
        <div className="flex w-[64px] gap-[1px] pr-[5px]">
          {["M3 1v8M8 1L4 5l4 4z", "M7 1L3 5l4 4z", "M3 1l4 4-4 4z", "M2 1l4 4-4 4zM7 1v8"].map((d, i) => (
            <span key={d} className="flex flex-1 items-center justify-center border border-[#bbb] bg-[#f0f0f0]">
              <svg width="10" height="10" viewBox="0 0 10 10">
                <path d={d} fill={i < 2 ? "#111" : "#aaa"} stroke={i < 2 ? "#111" : "#aaa"} />
              </svg>
            </span>
          ))}
        </div>
      </div>
    </div>
  );
}

function BottomPanel() {
  return (
    <section className="h-[308px] flex flex-col bg-[#f0f0f0] shrink-0">
      <PanelHead title="4.12 Průřezy - vnitřní síly" />
      <div className="h-[26px] flex items-center bg-linear-to-b from-[#f0f3f9] to-[#d9deea] border-b border-[#9aa2b0] pl-[4px] shrink-0">
        <Tools spec="tg _ _ tplus tdown twedge* twave | tabl tabr ! hook1* hook2* | tgrid tpen |" />
        <span className="w-[6px]" />
        <Combo text="KZ3 - Konstante + variable Kompor" w="w-[195px]" sel />
        <span className="w-[13px]" />
        <Tools spec="tl tr | _ stack* | _ _" />
        <Combo text={<span className="pl-[3px]">6&nbsp;&nbsp;|&nbsp;&nbsp;Faktor: 11.000</span>} w="w-[196px]" sel />
        <span className="w-[11px]" />
        <Tools spec="tl tr | _ _ filter _ _ _ _ _ _ glass | tabor* _ _ _ _ _ xl _ _ _ _ calc" />
      </div>
      <Table />
      <TabStrip />
    </section>
  );
}

// ─── Menu + window chrome ─────────────────────────────────────────────────────
const MENU: [ReactNode, string][] = [
  [<><u>S</u>oubor</>, "w-[53px]"],
  [<>Úpr<u>a</u>vy</>, "w-[50px]"],
  [<><u>Z</u>obrazit</>, "w-[57px]"],
  [<>Vlo<u>ž</u>it</>, "w-[44px]"],
  [<>Výp<u>o</u>čet</>, "w-[56px]"],
  [<>Výsled<u>k</u>y</>, "w-[59px]"],
  [<>Nástro<u>j</u>e</>, "w-[58px]"],
  [<><u>T</u>abulka</>, "w-[56px]"],
  [<>Nasta<u>v</u>ení</>, "w-[65px]"],
  [<>Př<u>í</u>davné moduly</>, "w-[100px]"],
  [<><u>O</u>kno</>, "w-[44px]"],
  [<><u>N</u>ápověda</>, "w-[60px]"],
];

function Chrome() {
  return (
    <>
      <div className="h-[30px] flex items-center bg-white border-t border-[#707070] shrink-0">
        <svg width="18" height="18" viewBox="0 0 18 18" className="ml-[7px] mr-[5px]">
          <path d="M9 1l7 3.500v9L9 17l-7-3.500v-9z" fill="#5f6978" />
          <path d="M9 1l7 3.500L9 8 2 4.500z" fill="#a3b5d0" />
          <text x="5" y="15" fontSize="11" fontWeight="700" fill="#e8b030">5</text>
        </svg>
        <span className="text-[11.5px] text-[#111] whitespace-nowrap">RFEM 5.27.01 x64 Student - [stab, KZ3*]</span>
        <span className="flex-1" />
        <svg width="12" height="12" viewBox="0 0 12 12" className="mr-[33px]"><path d="M1 6.500h10" stroke="#111" /></svg>
        <svg width="12" height="12" viewBox="0 0 12 12" className="mr-[34px]"><rect x="1.500" y="1.500" width="9" height="9" fill="none" stroke="#111" /></svg>
        <svg width="12" height="12" viewBox="0 0 12 12" className="mr-[18px]"><path d="M1 1l10 10M11 1L1 11" stroke="#111" /></svg>
      </div>
      <div className="h-[25px] flex items-center bg-[#cfd3dc] shrink-0 text-[11.5px] text-[#3c3f48]">
        <span className="w-[10px] flex"><Grip w="w-[8px]" /></span>
        <svg width="20" height="16" viewBox="0 0 20 16" className="mr-[7px]">
          <rect width="20" height="16" fill="#1c3f7c" />
          <path d="M3 11h14M10 2L4 11M10 2l6 9M10 2v9" stroke="#fff" fill="none" />
        </svg>
        {MENU.map(([t, w], i) => (
          <span key={i} className={`${w} shrink-0 whitespace-nowrap`}>{t}</span>
        ))}
        <span className="flex-1" />
        <span className="flex items-center gap-[7px] pr-[5px] text-[#7c8290]">
          <svg width="9" height="9" viewBox="0 0 9 9"><path d="M1 7.500h7" stroke="#7c8290" strokeWidth="1.500" /></svg>
          <svg width="9" height="9" viewBox="0 0 9 9"><path d="M.5 2.500h6v6h-6zM2.500 2.500v-2h6v6h-2" fill="none" stroke="#7c8290" /></svg>
          <svg width="9" height="9" viewBox="0 0 9 9"><path d="M.5.5l8 8M8.500.5l-8 8" stroke="#7c8290" strokeWidth="1.300" /></svg>
        </span>
      </div>
      <div className="h-[26px] flex gap-[1px] pl-[4px] shrink-0 bg-[#cfd3dc]">
        <Bar className="w-[862px]">
          <Grip w="w-[7px]" />
          <Tools spec="new open chest chestb save memo print prev | undo redo | para tgt tgt2 notep wins | list* table* | load" />
          <span className="w-[2px]" />
          <Combo text="KZ3 - Konstante + variable Komponent" w="w-[215px]" />
          <span className="w-[5px]" />
          <Tools spec="tl tr _ p1* p2* p3* p4* | wrench abac1 abac2" />
        </Bar>
        <Bar className="w-[328px]">
          <Grip w="w-[9px]" />
          <Tools spec="rough grid iso1 iso2 iso3* mesh path | chain rot mirror xcross info gear1 gears" />
        </Bar>
        <Bar className="w-[99px]">
          <Grip w="w-[9px]" />
          <Tools spec="flagd flagu redd redu" />
        </Bar>
      </div>
      <div className="h-[27px] flex gap-[2px] pl-[4px] shrink-0 bg-[#cfd3dc]">
        <Bar className="w-[634px]">
          <Grip w="w-[6px]" />
          <Tools spec="node. _ line _ linei. poly. ! _ sup _ sup2 surf | dim. _ dimx boxd | plane. _ frb. sect. cubeg _ cubes. | flow. loadd frames frames framesg wall." />
        </Bar>
        <Bar className="w-[305px]">
          <Grip w="w-[6px]" />
          <Tools spec="bug mag1 mag2 box3 box4 | fx fy fz _ fnx. _ scope. | shape." />
        </Bar>
        <Bar className="w-[351px]">
          <Grip w="w-[9px]" />
          <Tools spec="frameor* printc | beamw surfc boxc supa* lens _ quad. wave rowsc | listc* spark. rainbow." />
        </Bar>
      </div>
    </>
  );
}

function StatusBar() {
  const btn = "h-[18px] flex items-center justify-center shrink-0 border border-[#222] border-r-white border-b-white";
  return (
    <div className="h-[22px] flex items-center bg-linear-to-b from-[#dfe2e8] via-[#b9bec8] to-[#c9cdd6] border-t border-[#fff] text-[12px] text-[#222] tracking-[-0.4px] shrink-0 [font-family:'Liberation_Sans',sans-serif]">
      <span className="w-[612px] pl-[5px]">Pracovní rovina</span>
      <span className={`${btn} w-[44px]`}>UCHOP</span>
      <span className="w-[46px] h-[18px] flex items-center justify-center shrink-0 border border-white">RASTR</span>
      <span className={`${btn} w-[50px]`}>KARTEZ</span>
      <span className={`${btn} w-[54px] ml-[1px]`}>OUCHOP</span>
      <span className={`${btn} w-[42px] ml-[2px]`}>VLINIE</span>
      <span className={`${btn} w-[27px]`}>DXF</span>
      <span className="w-[105px]" />
      <span className="w-[89px] whitespace-nowrap">SS: Globální XYZ</span>
      <span className="w-[88px] pl-[1px] border-l border-[#8f95a2] whitespace-nowrap">Rovina: XZ</span>
      <span className="w-[73px] pl-[1px] border-l border-[#8f95a2] whitespace-nowrap">X: 2675.5 mm</span>
      <span className="w-[75px] pl-[1px] border-l border-[#8f95a2] whitespace-nowrap">Y: 0.0 mm</span>
      <span className="flex-1 pl-[1px] border-l border-[#8f95a2] whitespace-nowrap">Z: -1144.3 mm</span>
    </div>
  );
}

// ─── Page ─────────────────────────────────────────────────────────────────────
export default function App() {
  return (
    <div className="relative w-[1400px] h-[1050px] flex flex-col overflow-hidden bg-[#cfd3dc] tracking-[-0.15px] [font-family:'Noto_Sans',sans-serif]">
      <Chrome />
      <div className="flex-1 flex min-h-0 items-stretch">
        <Navigator />
        <div className="w-[1120px] flex flex-col pl-[4px]">
          <div className="h-[610px] flex shrink-0">
            <View />
            <SidePanel />
          </div>
          <div className="h-[2px] shrink-0" />
          <BottomPanel />
        </div>
      </div>
      <StatusBar />

      {/* red callout arrows drawn on top of the screenshot */}
      <svg viewBox="0 0 1400 1050" className="absolute inset-0 w-full h-full pointer-events-none">
        <line x1="780" y1="675" x2="817" y2="728" stroke="#e8252b" strokeWidth="2.500" />
        <polygon points="823,737 809,727 821,719" fill="#e8252b" />
        <line x1="1181" y1="565" x2="1233" y2="518" stroke="#e8252b" strokeWidth="2.500" />
        <polygon points="1241,511 1226,516 1236,527" fill="#e8252b" />
      </svg>
    </div>
  );
}
